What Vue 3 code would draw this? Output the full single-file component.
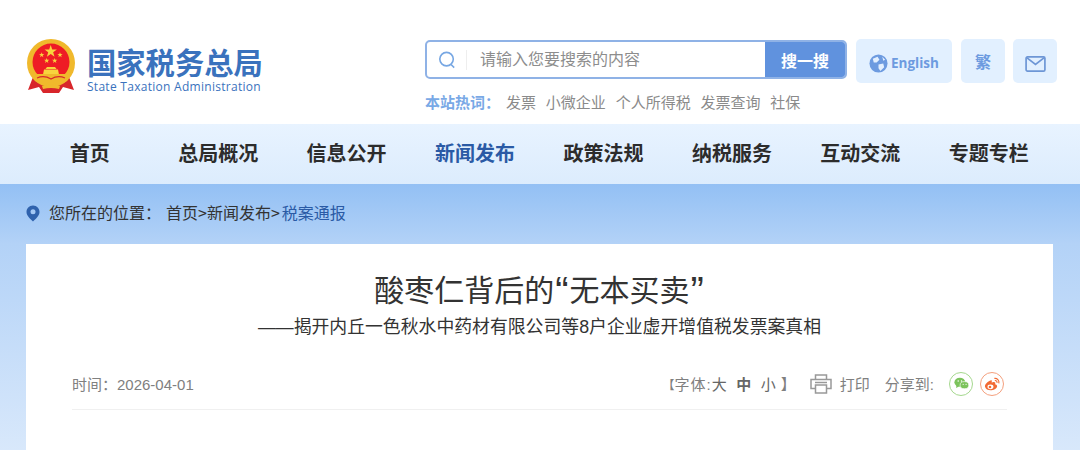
<template>
  <div class="page">
    <header class="top">
      <div class="logo">
        <svg class="emblem" width="50" height="54" viewBox="0 0 50 54">
          <defs>
            <path id="star" d="M0 -10 L2.350 -3.240 L9.510 -3.090 L3.800 1.240 L5.880 8.090 L0 4 L-5.880 8.090 L-3.800 1.240 L-9.510 -3.090 L-2.350 -3.240 Z" fill="#f8d43e" />
          </defs>
          <path d="M7 38 L2 51 L13 48 L17 54 L33 54 L37 48 L48 51 L43 38 Z" fill="#d8262b" />
          <circle cx="25" cy="24" r="24" fill="#f0b92c" />
          <circle cx="25" cy="23" r="18.500" fill="#ee1c25" />
          <use href="#star" transform="translate(24.700 12.500) scale(0.65)" />
          <use href="#star" transform="translate(15.700 16) scale(0.28)" />
          <use href="#star" transform="translate(34 16) scale(0.28)" />
          <use href="#star" transform="translate(20.700 21.700) scale(0.28)" />
          <use href="#star" transform="translate(28.700 21.700) scale(0.28)" />
          <path d="M21 28 h8 l1.500 2 h-11 Z M18 30.500 h14 l1 5 h-16 Z" fill="#f8d43e" />
          <path d="M6 35 H44 L41 42 Q33 47 25 43 Q17 47 9 42 Z" fill="#f0b92c" />
          <path d="M11 39 Q18 36 25 40 Q32 36 39 39" fill="none" stroke="#d8262b" stroke-width="1.200" />
          <path d="M16 47 Q25 44 34 47 L33 50 Q25 48 17 50 Z" fill="#f0b92c" />
        </svg>
        <div class="logo-text">
          <div class="logo-cn">国家税务总局</div>
          <div class="logo-en">State Taxation Administration</div>
        </div>
      </div>

      <div class="search-col">
        <div class="search-box">
          <svg class="search-icon" width="18" height="18" viewBox="0 0 20 20" fill="none" stroke="#77a7e3" stroke-width="1.800">
            <circle cx="9.500" cy="9" r="7.500" />
            <path d="M14.500 15 L18 18.500" />
          </svg>
          <span class="search-sep"></span>
          <input class="search-input" type="text" placeholder="请输入您要搜索的内容" />
          <button class="search-btn" type="button">搜一搜</button>
        </div>
        <div class="hot">
          <span class="hot-label">本站热词：</span>
          <span v-for="word in hotWords" :key="word" class="hot-word">{{ word }}</span>
        </div>
      </div>

      <div class="tools">
        <a class="tool tool-en">
          <svg width="19" height="19" viewBox="0 0 20 20">
            <circle cx="10" cy="10" r="9.500" fill="#6d9be0" />
            <path d="M4 5 L9 3 L11 6 L8 9 L5 9 Z M10 11 L15 10 L16 14 L12 18 L10 15 Z M14 3 L17 6 L15 7 Z" fill="#e3f0ff" />
          </svg>
          <span>English</span>
        </a>
        <a class="tool tool-sq">繁</a>
        <a class="tool tool-sq tool-mail">
          <svg width="21" height="16" viewBox="0 0 22 17" fill="none" stroke="#6d96d6" stroke-width="1.800">
            <rect x="1" y="1" width="20" height="15" rx="1.500" />
            <path d="M2 2 L11 9 L20 2" />
          </svg>
        </a>
      </div>
    </header>

    <nav class="nav">
      <a v-for="item in navItems" :key="item" class="nav-item" :class="{ active: item === '新闻发布' }">{{ item }}</a>
    </nav>

    <section class="main">
      <div class="crumb">
        <svg class="pin" width="14" height="17" viewBox="0 0 14 17">
          <path d="M7 0.500 C3 0.500 0.500 3.500 0.500 7 C0.500 11 4.500 14 7 16.500 C9.500 14 13.500 11 13.500 7 C13.500 3.500 11 0.500 7 0.500 Z" fill="#2f62ad" />
          <circle cx="7" cy="6.800" r="2.500" fill="#a3c8f5" />
        </svg>
        <span class="crumb-label">您所在的位置：</span>
        <span>首页&gt;新闻发布&gt;<span class="crumb-now">税案通报</span></span>
      </div>

      <article class="card">
        <h1 class="title"><span>酸枣仁背后的</span><span class="quote">“</span><span>无本买卖</span><span class="quote">”</span></h1>
        <h2 class="subtitle">——揭开内丘一色秋水中药材有限公司等8户企业虚开增值税发票案真相</h2>
        <div class="meta">
          <span class="date">时间：2026-04-01</span>
          <div class="meta-right">
            <span class="font-size"><i class="fs-open">【</i><span class="fs-label">字体:</span><b class="fs">大</b><b class="fs strong">中</b><b class="fs">小</b><i class="fs-end">】</i></span>
            <span class="print">
              <svg width="22" height="20" viewBox="0 0 22 20" fill="none" stroke="#999" stroke-width="1.500">
                <path d="M5.500 5.500 V1 H16.500 V5.500" />
                <path d="M5 14.500 H1 V5.500 H21 V14.500 H17" />
                <path d="M5.500 11 H16.500 V19 H5.500 Z" />
                <path d="M5 8.500 H17" />
              </svg>
              打印
            </span>
            <span class="share">分享到:</span>
            <span class="share-btn wx">
              <svg width="18" height="15" viewBox="0 0 18 15">
                <ellipse cx="7" cy="6" rx="6.500" ry="5.500" fill="#7cc35c" />
                <path d="M3 9.500 L2.500 13 L6 11 Z" fill="#7cc35c" />
                <ellipse cx="12.500" cy="9.500" rx="5.200" ry="4.300" fill="#7cc35c" stroke="#fff" stroke-width="0.800" />
                <circle cx="5" cy="4.500" r="0.900" fill="#fff" />
                <circle cx="9" cy="4.500" r="0.900" fill="#fff" />
                <circle cx="11" cy="8.500" r="0.700" fill="#fff" />
                <circle cx="14.500" cy="8.500" r="0.700" fill="#fff" />
              </svg>
            </span>
            <span class="share-btn wb">
              <svg width="18" height="15" viewBox="0 0 18 15">
                <path d="M7.500 3.500 C3.500 5 0.500 8 1 10.500 C1.500 13.500 5 14.500 8 14.200 C11.500 13.800 14 12 14 10 C14 8.500 12.500 8 11.800 7.800 C12.500 6 11.500 5 9.500 5.500 L8 6 C8.500 4 8.500 3.200 7.500 3.500 Z" fill="#f26a34" />
                <ellipse cx="6.800" cy="10.500" rx="3.200" ry="2.500" fill="#fff" />
                <circle cx="6.300" cy="10.700" r="1.400" fill="#f26a34" />
                <path d="M11 1.500 C14 1 16.500 3.500 15.800 6.800 M11.500 3.800 C13 3.500 14.200 4.800 13.800 6.300" fill="none" stroke="#f26a34" stroke-width="1.200" />
              </svg>
            </span>
          </div>
        </div>
      </article>
    </section>
  </div>
</template>

<script setup>
const hotWords = ['发票', '小微企业', '个人所得税', '发票查询', '社保']
const navItems = ['首页', '总局概况', '信息公开', '新闻发布', '政策法规', '纳税服务', '互动交流', '专题专栏']
</script>

<style>
html,
body {
  margin: 0;
  background: #fff;
  overflow: hidden;
}
</style>

<style scoped>
.page {
  width: 1080px;
  height: 450px;
  overflow: hidden;
  font-family: "Noto Sans CJK SC", "Noto Sans", sans-serif;
  color: #333;
}

.top {
  height: 124px;
  box-sizing: border-box;
  padding: 39px 0 0 26px;
  display: flex;
  align-items: flex-start;
}

.logo {
  width: 399px;
  flex: none;
  display: flex;
  gap: 11px;
}

.emblem {
  flex: none;
}

.logo-cn {
  font-size: 29.300px;
  line-height: 36px;
  margin-top: 4px;
  font-weight: 700;
  color: #3a72bd;
  white-space: nowrap;
}

.logo-en {
  font-size: 12px;
  line-height: 14px;
  margin-top: 1px;
  color: #3a72bd;
  font-family: "Open Sans", sans-serif;
  letter-spacing: 0.28px;
  white-space: nowrap;
}

.search-col {
  width: 422px;
  flex: none;
  margin-top: 1px;
}

.search-box {
  height: 39px;
  box-sizing: border-box;
  border: 2px solid #8fb2e6;
  border-radius: 5px;
  display: flex;
  align-items: center;
  overflow: hidden;
}

.search-icon {
  margin-left: 11px;
  flex: none;
}

.search-sep {
  width: 1px;
  height: 20px;
  margin-left: 10px;
  background: #eee;
  flex: none;
}

.search-input {
  flex: 1;
  min-width: 0;
  border: none;
  outline: none;
  padding: 0 0 3px 13px;
  font-family: inherit;
  font-size: 16px;
  color: #333;
}

.search-input::placeholder {
  color: #8d8d8d;
  opacity: 1;
}

.search-btn {
  width: 80px;
  height: 100%;
  border: none;
  background: #6092de;
  color: #fff;
  font-family: inherit;
  font-size: 16px;
  font-weight: 700;
  padding: 0;
}

.hot {
  margin-top: 13px;
  display: flex;
  font-size: 15px;
  line-height: 20px;
  color: #8a8a8a;
  white-space: nowrap;
}

.hot-label {
  color: #79a9e6;
  font-weight: 700;
  margin-right: 6px;
}

.hot-word {
  margin-right: 9.800px;
}

.tools {
  margin-left: 9px;
  display: flex;
  gap: 9px;
  flex: none;
}

.tool {
  height: 44px;
  box-sizing: border-box;
  background: #e2f0ff;
  border-radius: 5px;
  display: flex;
  align-items: center;
  justify-content: center;
  color: #6d9be0;
  font-weight: 700;
  font-size: 16px;
}

.tool-en {
  width: 96px;
  gap: 3px;
  padding-top: 4px;
  font-size: 13.500px;
  font-family: "Open Sans", sans-serif;
}

.tool-sq {
  width: 44px;
}

.tool-mail {
  margin-left: -1px;
  padding-top: 5px;
}

.nav {
  height: 60px;
  background: linear-gradient(#e8f3ff, #dcecfd);
  display: grid;
  grid-template-columns: repeat(8, 128.450px);
  padding-left: 25.500px;
}

.nav-item {
  font-size: 20px;
  font-weight: 700;
  line-height: 58px;
  text-align: center;
  color: #2c2c2c;
}

.nav-item.active {
  color: #2a5aa5;
}

.main {
  height: 266px;
  padding: 0 27px 0 26px;
  background: linear-gradient(#93c0f4, #b3d2f7 60px, #d8e8fb 266px);
}

.crumb {
  height: 60px;
  display: flex;
  align-items: center;
  font-size: 16px;
  color: #333;
  white-space: nowrap;
  padding-bottom: 5px;
  box-sizing: border-box;
}

.pin {
  margin-top: 4px;
}

.crumb-label {
  margin: 0 5px 0 9px;
  width: 112px;
}

.crumb-now {
  color: #2a5aa5;
  margin-left: 2px;
}

.card {
  background: #fff;
  height: 206px;
  padding: 0 46px;
  box-sizing: border-box;
}

.title {
  margin: 0;
  padding-top: 26px;
  font-size: 30px;
  line-height: 42px;
  font-weight: 400;
  text-align: center;
  color: #333;
  font-family: "Liberation Sans", "Noto Sans CJK SC", sans-serif;
}

.quote {
  font-size: 40px;
  line-height: 30px;
  padding: 0 1px;
  vertical-align: -4px;
}

.subtitle {
  margin: 1px 0 0;
  font-size: 17.850px;
  line-height: 28px;
  font-weight: 400;
  text-align: center;
  color: #333;
  font-family: "Liberation Sans", "Noto Sans CJK SC", sans-serif;
}

.meta {
  margin-top: 31px;
  height: 38px;
  box-sizing: border-box;
  border-bottom: 1px solid #f0f0f0;
  padding: 0 3px 14px 0;
  display: flex;
  justify-content: space-between;
  align-items: center;
  font-size: 15px;
  color: #808080;
  font-family: "Liberation Sans", "Noto Sans CJK SC", sans-serif;
}

.meta-right {
  display: flex;
  align-items: center;
}

.fs-open {
  font-style: normal;
  font-size: 12px;
}

.fs-label {
  letter-spacing: 1px;
}

.fs {
  font-weight: 400;
  color: #666;
  margin-left: 9.500px;
}

.fs:first-of-type {
  margin-left: 0;
}

.fs.strong {
  font-weight: 700;
}

.fs-end {
  font-style: normal;
  margin-left: 5px;
}

.print {
  display: flex;
  align-items: center;
  gap: 8px;
  margin-left: 14px;
}

.share {
  margin-left: 15px;
  margin-right: 15px;
}

.share-btn {
  width: 24px;
  height: 24px;
  border-radius: 50%;
  border: 1px solid;
  box-sizing: border-box;
  display: flex;
  align-items: center;
  justify-content: center;
}

.wx svg {
  width: 15px;
  height: 13px;
}

.wb svg {
  width: 17px;
  height: 14px;
}

.wx {
  border-color: #a5d88e;
}

.wb {
  border-color: #f4a07e;
  margin-left: 7px;
}
</style>
